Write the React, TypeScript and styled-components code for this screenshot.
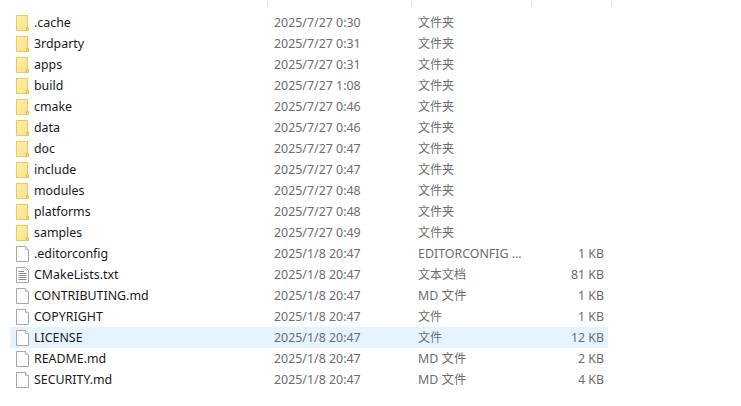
import React from 'react';
import styled, { createGlobalStyle } from 'styled-components';

const Global = createGlobalStyle`
  html, body { margin: 0; padding: 0; background: #fff; }
  body { width: 741px; height: 406px; overflow: hidden; }
`;

const Page = styled.div`
  width: 741px;
  height: 406px;
  display: flex;
  flex-direction: column;
  font-family: "Noto Sans", "Noto Sans CJK SC", sans-serif;
  font-size: 12.4px;
`;

const Header = styled.div`
  height: 7px;
  display: grid;
  grid-template-columns: 268px 144px 120px 80px;
`;

const HeaderCell = styled.div`
  border-right: 1px solid #e5e5e5;
`;

const List = styled.div`
  margin: 5px 0 0 10px;
  width: 598px;
  display: flex;
  flex-direction: column;
`;

const Row = styled.div<{ $selected?: boolean }>`
  height: 21px;
  display: grid;
  grid-template-columns: 24px 240px 144px 120px 1fr;
  align-items: center;
  line-height: 21px;
  background: ${(p) => (p.$selected ? '#e5f3ff' : 'transparent')};
`;

const IconCell = styled.div`
  display: flex;
  padding-left: 6px;
`;

const Name = styled.div`
  color: #1a1a1a;
  white-space: nowrap;
`;

const Meta = styled.div`
  color: #6d6d6d;
  white-space: nowrap;
`;

const TypeLabel = styled(Meta)<{ $cjk: boolean }>`
  font-size: ${(p) => (p.$cjk ? '12px' : '12.4px')};
`;

const Size = styled(Meta)`
  text-align: right;
  padding-right: 4px;
`;

const FolderIcon = () => (
  <svg width="13" height="16" viewBox="0 0 13 16">
    <defs>
      <linearGradient id="folderFill" x1="0" y1="0" x2="1" y2="1">
        <stop offset="0" stopColor="#fdeeae" />
        <stop offset="1" stopColor="#fde08a" />
      </linearGradient>
    </defs>
    <rect x="0.5" y="0.5" width="11" height="15" fill="url(#folderFill)" stroke="#efca55" />
    <path d="M10.5 15.5V12.5H12.5V15.5Z" fill="#fbdc7c" stroke="#e8bf3c" />
  </svg>
);

const FileIcon = () => (
  <svg width="14" height="16" viewBox="0 0 14 16">
    <path d="M0.5 0.5H9.5L12.5 3.5V15.5H0.5Z" fill="#fff" stroke="#a6a6a6" />
    <path d="M9.5 0.5V3.5H12.5" fill="#f0f0f0" stroke="#b8b8b8" />
  </svg>
);

const TextIcon = () => (
  <svg width="14" height="16" viewBox="0 0 14 16">
    <path d="M0.5 0.5H9.5L12.5 3.5V15.5H0.5Z" fill="#fff" stroke="#a6a6a6" />
    <path d="M2.5 4.5H8M2.5 6.5H10.5M2.5 8.5H10.5M2.5 10.5H10.5M2.5 12.5H10.5" stroke="#8a8a8a" />
  </svg>
);

type Item = {
  name: string;
  date: string;
  type: string;
  size?: string;
  icon: 'folder' | 'file' | 'text';
  selected?: boolean;
};

const folder = (name: string, date: string): Item => ({ name, date, type: '文件夹', icon: 'folder' });

const items: Item[] = [
  folder('.cache', '2025/7/27 0:30'),
  folder('3rdparty', '2025/7/27 0:31'),
  folder('apps', '2025/7/27 0:31'),
  folder('build', '2025/7/27 1:08'),
  folder('cmake', '2025/7/27 0:46'),
  folder('data', '2025/7/27 0:46'),
  folder('doc', '2025/7/27 0:47'),
  folder('include', '2025/7/27 0:47'),
  folder('modules', '2025/7/27 0:48'),
  folder('platforms', '2025/7/27 0:48'),
  folder('samples', '2025/7/27 0:49'),
  { name: '.editorconfig', date: '2025/1/8 20:47', type: 'EDITORCONFIG ...', size: '1 KB', icon: 'file' },
  { name: 'CMakeLists.txt', date: '2025/1/8 20:47', type: '文本文档', size: '81 KB', icon: 'text' },
  { name: 'CONTRIBUTING.md', date: '2025/1/8 20:47', type: 'MD 文件', size: '1 KB', icon: 'file' },
  { name: 'COPYRIGHT', date: '2025/1/8 20:47', type: '文件', size: '1 KB', icon: 'file' },
  { name: 'LICENSE', date: '2025/1/8 20:47', type: '文件', size: '12 KB', icon: 'file', selected: true },
  { name: 'README.md', date: '2025/1/8 20:47', type: 'MD 文件', size: '2 KB', icon: 'file' },
  { name: 'SECURITY.md', date: '2025/1/8 20:47', type: 'MD 文件', size: '4 KB', icon: 'file' },
];

const icons = { folder: FolderIcon, file: FileIcon, text: TextIcon };

export default function App() {
  return (
    <Page>
      <Global />
      <Header>
        <HeaderCell />
        <HeaderCell />
        <HeaderCell />
        <HeaderCell />
      </Header>
      <List>
        {items.map((it) => {
          const Icon = icons[it.icon];
          return (
            <Row key={it.name} $selected={it.selected}>
              <IconCell><Icon /></IconCell>
              <Name>{it.name}</Name>
              <Meta>{it.date}</Meta>
              <TypeLabel $cjk={!/[A-Z]/.test(it.type)}>{it.type}</TypeLabel>
              <Size>{it.size}</Size>
            </Row>
          );
        })}
      </List>
    </Page>
  );
}
